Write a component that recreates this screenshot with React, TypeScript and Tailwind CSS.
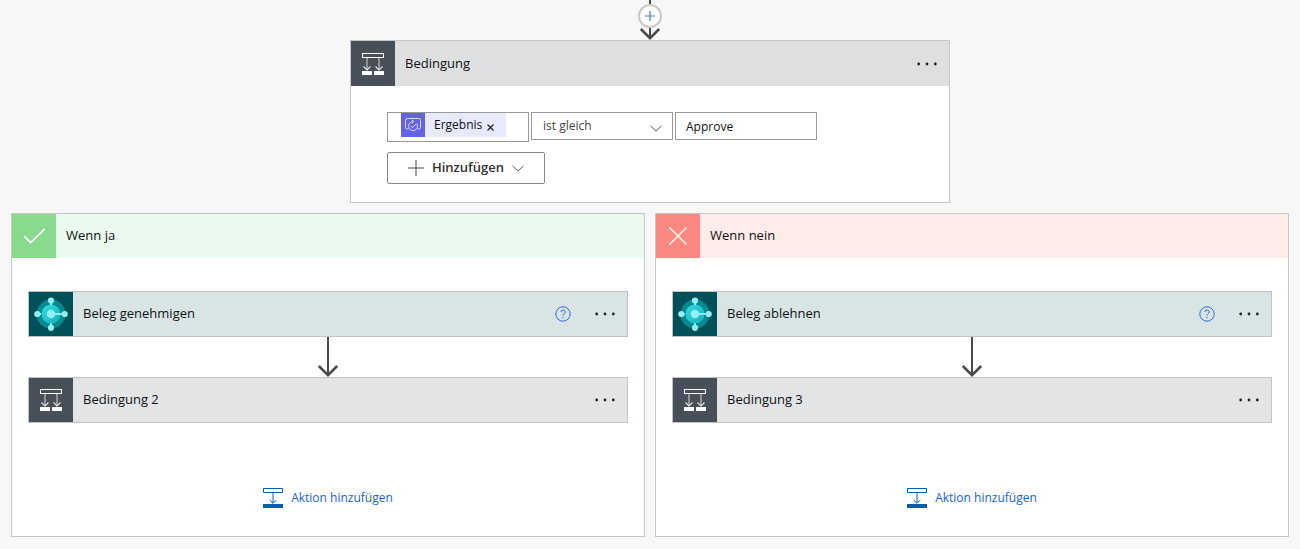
import type { ReactNode } from "react";

function ConditionIcon() {
  return (
    <svg width="22" height="22" viewBox="0 0 22 22" fill="none" aria-hidden="true">
      <rect x="0.5" y="0.5" width="21" height="4" stroke="#fff" />
      <path d="M5 5v11.500M17 5v11.500" stroke="#d5d9de" />
      <path d="M1.500 13.500L5 17l3.500-3.500M13.500 13.500L17 17l3.500-3.500" stroke="#e4e7ea" strokeWidth="1.100" />
      <path d="M0 18h10v4H0zM12 18h10v4H12z" fill="#fff" />
    </svg>
  );
}

function BusinessCentralIcon() {
  return (
    <svg width="44" height="44" viewBox="0 0 44 44" aria-hidden="true">
      <defs>
        <linearGradient id="core" x1="0" y1="0" x2="1" y2="1">
          <stop offset="0" stopColor="#35dbe2" />
          <stop offset="1" stopColor="#12b3bd" />
        </linearGradient>
      </defs>
      <circle cx="22" cy="22" r="14.500" fill="#058a91" />
      <circle cx="22" cy="22" r="9.500" fill="url(#core)" />
      <path d="M22 22h14M8 22h4M22 9v4M22 35v-4" stroke="#8eeaf0" strokeWidth="2" />
      <circle cx="22" cy="22" r="4.300" fill="#93eff4" />
      <g fill="#93eff4">
        <circle cx="22" cy="8.500" r="3.100" />
        <circle cx="8.300" cy="22" r="3.100" />
        <circle cx="35.700" cy="22" r="3.100" />
        <circle cx="22" cy="35.800" r="3.100" />
      </g>
    </svg>
  );
}

function ApprovalIcon() {
  return (
    <svg width="18" height="16" viewBox="0 0 18 16" fill="none" stroke="#d9d8ff" aria-hidden="true">
      <path d="M4.500 12H3.200Q1.500 12 1.500 10.300V3.200Q1.500 1.500 3.200 1.500h11.600Q16.500 1.500 16.500 3.200v7.100q0 1.700-1.700 1.700h-1.300" />
      <path d="M12.600 6.300A4.500 4.500 0 1 1 8.800 4.600M7.800 2.800l2 1.800-2 1.900M6.800 9l1.600 1.700 3.500-3.600" />
    </svg>
  );
}

function Chevron() {
  return (
    <svg width="12" height="7" viewBox="0 0 12 7" fill="none" stroke="#555" aria-hidden="true">
      <path d="M0.500 0.800L6 6.200l5.500-5.400" />
    </svg>
  );
}

function Arrow({ height }: { height: number }) {
  return (
    <svg width="22" height={height} viewBox={`0 0 22 ${height}`} fill="none" stroke="#484a4c" aria-hidden="true">
      <path d={`M11 0V${height - 2}`} strokeWidth="2" />
      <path d={`M1.800 ${height - 11}L11 ${height - 1.8}l9.200-9.200`} strokeWidth="2.500" />
    </svg>
  );
}

function MenuButton({ label }: { label: string }) {
  return (
    <button type="button" aria-label={`Menü für ${label}`} className="flex h-8 w-11 items-center justify-center">
      <svg width="20" height="4" viewBox="0 0 20 4" fill="#222" aria-hidden="true">
        <circle cx="1.700" cy="2" r="1.400" />
        <circle cx="10" cy="2" r="1.400" />
        <circle cx="18.300" cy="2" r="1.400" />
      </svg>
    </button>
  );
}

function HelpButton() {
  return (
    <button type="button" aria-label="Hilfe" className="mr-1 flex size-8 items-center justify-center">
      <svg width="16" height="16" viewBox="0 0 16 16" fill="none" stroke="#2f68e0" aria-hidden="true">
        <circle cx="8" cy="8" r="7.200" />
        <path d="M5.900 6.100Q6 4 8.100 4T10.200 5.900Q10.200 7 9.100 7.700T8 9.800" />
        <path d="M8 11v1.200" />
      </svg>
    </button>
  );
}

type StepProps = { title: string; kind: "condition" | "action" };

function Step({ title, kind }: StepProps) {
  const action = kind === "action";
  return (
    <div className={`flex w-full items-center border border-[#bfc3c4] ${action ? "bg-[#d9e5e4]" : "bg-[#e3e4e5]"}`}>
      <div className={`flex size-11 items-center justify-center ${action ? "bg-[#00505a]" : "bg-[#484f58]"}`}>
        {action ? <BusinessCentralIcon /> : <ConditionIcon />}
      </div>
      <h3 className="flex-1 pl-[10px] text-[13px]">{title}</h3>
      {action && <HelpButton />}
      <MenuButton label={title} />
    </div>
  );
}

type BranchProps = { title: string; iconClass: string; headerClass: string; icon: ReactNode; steps: StepProps[] };

function Branch({ title, iconClass, headerClass, icon, steps }: BranchProps) {
  return (
    <section className="border border-[#c6c6c6] bg-white">
      <header className={`flex items-center ${headerClass}`}>
        <div className={`flex size-11 items-center justify-center ${iconClass}`}>{icon}</div>
        <h2 className="pl-[10px] text-[13px]">{title}</h2>
      </header>
      <div className="flex flex-col items-center px-4 pt-[33px] pb-[22px]">
        <Step {...steps[0]} />
        <Arrow height={40} />
        <Step {...steps[1]} />
        <button type="button" className="mt-[59px] flex h-8 items-center gap-2 text-xs text-[#1763d6]">
          <svg width="20" height="20" viewBox="0 0 20 20" fill="none" stroke="#0b5cab" aria-hidden="true">
            <path d="M0.500 0.500h19v4H0.500zM10 5v10M6.700 12l3.300 3.300 3.300-3.300" />
            <path d="M0 16h20v4H0z" fill="#0b5cab" stroke="none" />
          </svg>
          Aktion hinzufügen
        </button>
      </div>
    </section>
  );
}

export default function App() {
  return (
    <main className="flex min-h-screen flex-col items-center bg-[#f7f7f7] px-[11px] pb-3 font-['Open_Sans','Noto_Sans',sans-serif] text-[#111]">
      <div className="h-1 w-[2px] bg-[#484a4c]" />
      <button
        type="button"
        aria-label="Neuen Schritt einfügen"
        className="flex size-6 items-center justify-center rounded-full border-2 border-[#c8c8c8] bg-white"
      >
        <svg width="10" height="10" viewBox="0 0 10 10" stroke="#4a7bd0" aria-hidden="true">
          <path d="M5 0v10M0 5h10" strokeWidth="1.200" />
        </svg>
      </button>
      <Arrow height={12} />

      <section className="w-full max-w-[600px] border border-[#c6c6c6] bg-white">
        <header className="flex items-center bg-[#dddfe0]">
          <div className="flex h-[45px] w-11 items-center justify-center bg-[#484f58]">
            <ConditionIcon />
          </div>
          <h2 className="flex-1 pl-[10px] text-[13px]">Bedingung</h2>
          <MenuButton label="Bedingung" />
        </header>
        <div className="px-9 pt-[26px] pb-[18px]">
          <div className="flex flex-wrap items-start gap-[2px] text-xs">
            <div className="h-[30px] w-[142px] border border-[#999] pl-[13px]">
              <div className="flex h-6 w-[105px] items-center bg-[#e8e8fe]">
                <span className="flex size-6 items-center justify-center bg-[#6264e8]">
                  <ApprovalIcon />
                </span>
                <span className="pl-[9px]">Ergebnis</span>
                <button type="button" aria-label="Ergebnis entfernen" className="flex h-6 w-4 items-center justify-center pt-1">
                  <svg width="7" height="7" viewBox="0 0 7 7" stroke="#222" strokeWidth="1.300" aria-hidden="true">
                    <path d="M0.500 0.500l6 6M6.500 0.500l-6 6" />
                  </svg>
                </button>
              </div>
            </div>
            <div className="relative">
              <select
                aria-label="Vergleichsoperator"
                className="h-7 w-[142px] appearance-none rounded-none border border-[#999] bg-white px-[11px] text-[#444]"
              >
                <option>ist gleich</option>
              </select>
              <span className="pointer-events-none absolute inset-y-0 right-[11px] flex items-center pt-1">
                <Chevron />
              </span>
            </div>
            <input
              aria-label="Vergleichswert"
              defaultValue="Approve"
              className="h-7 w-[142px] border border-[#999] bg-white px-[10px]"
            />
          </div>
          <button
            type="button"
            className="mt-[10px] flex h-8 w-[158px] items-center justify-center gap-2 rounded-xs border border-[#8a8886] text-[13px] font-semibold text-[#323130]"
          >
            <svg width="16" height="16" viewBox="0 0 16 16" stroke="#444" aria-hidden="true">
              <path d="M8 0v16M0 8h16" />
            </svg>
            Hinzufügen
            <Chevron />
          </button>
        </div>
      </section>

      <div className="mt-[10px] grid w-full grid-cols-1 gap-[10px] md:grid-cols-2">
        <Branch
          title="Wenn ja"
          iconClass="bg-[#88da8d]"
          headerClass="bg-[#eafaee]"
          icon={
            <svg width="24" height="16" viewBox="0 0 24 16" fill="none" stroke="#fff" strokeWidth="1.700" aria-hidden="true">
              <path d="M2.200 8.200l6.500 6.300L22.800 0.800" />
            </svg>
          }
          steps={[
            { title: "Beleg genehmigen", kind: "action" },
            { title: "Bedingung 2", kind: "condition" },
          ]}
        />
        <Branch
          title="Wenn nein"
          iconClass="bg-[#fb8981]"
          headerClass="bg-[#ffebea]"
          icon={
            <svg width="18" height="18" viewBox="0 0 18 18" fill="none" stroke="#fff" strokeWidth="1.300" aria-hidden="true">
              <path d="M0.500 0.500l17 17M17.500 0.500l-17 17" />
            </svg>
          }
          steps={[
            { title: "Beleg ablehnen", kind: "action" },
            { title: "Bedingung 3", kind: "condition" },
          ]}
        />
      </div>
    </main>
  );
}
